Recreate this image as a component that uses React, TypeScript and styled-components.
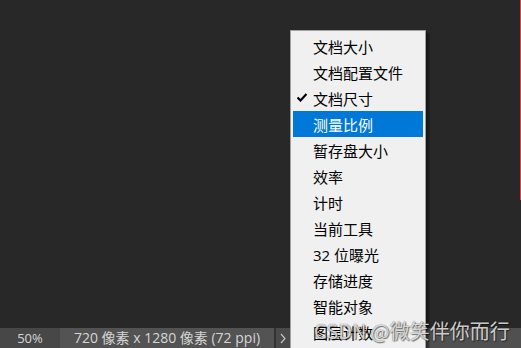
import React from "react"
import styled, { createGlobalStyle } from "styled-components"

const GlobalStyle = createGlobalStyle`
  html, body {
    margin: 0;
    padding: 0;
    background: #282828;
  }
  * {
    box-sizing: border-box;
  }
`

const Screen = styled.div`
  position: relative;
  width: 521px;
  height: 348px;
  overflow: hidden;
  display: flex;
  flex-direction: column;
  background: #282828;
  font-family: "Open Sans", "Noto Sans CJK SC", sans-serif;
`

const Canvas = styled.div`
  flex: 1;
  display: flex;
  justify-content: flex-end;
  align-items: flex-start;
`

const DocEdge = styled.div`
  width: 1px;
  height: 200px;
  background: #e8403f;
`

const StatusBar = styled.div`
  height: 20px;
  display: flex;
  background: #505050;
  color: #d6d6d6;
`

const Field = styled.div<{ $w: number; $bg: string; $size: number }>`
  width: ${({ $w }) => $w}px;
  background: ${({ $bg }) => $bg};
  font-size: ${({ $size }) => $size}px;
  display: flex;
  align-items: center;
  justify-content: center;
  white-space: nowrap;
  line-height: 20px;
`

const Divider = styled.div`
  width: 2px;
  background: #333333;
`

const ArrowBtn = styled.div`
  width: 14px;
  background: #4a4a4a;
  display: flex;
  align-items: center;
  justify-content: center;
`

const Menu = styled.ul`
  position: absolute;
  left: 290px;
  top: 30px;
  width: 136px;
  height: 330px;
  margin: 0;
  padding: 2px 2px;
  list-style: none;
  background: #f0f0f0;
  border: 1px solid #a0a0a0;
  box-shadow: 3px 3px 2px rgba(0, 0, 0, 0.45);
`

const Item = styled.li<{ $active?: boolean }>`
  position: relative;
  height: 26px;
  padding-left: 20px;
  display: flex;
  align-items: center;
  font-size: 15px;
  color: ${({ $active }) => ($active ? "#ffffff" : "#000000")};
  background: ${({ $active }) => ($active ? "#0078d7" : "transparent")};
  white-space: nowrap;
`

const Check = styled.svg`
  position: absolute;
  left: 4px;
  top: 8px;
`

const Watermark = styled.div`
  position: absolute;
  left: 314px;
  top: 316px;
  font-family: "Noto Sans CJK SC", sans-serif;
  font-size: 20px;
  color: rgba(255, 255, 255, 0.8);
  text-shadow: 0 0 1px rgba(0, 0, 0, 0.7), 1px 1px 1px rgba(0, 0, 0, 0.5);
  white-space: nowrap;
  pointer-events: none;
`

const items = [
  "文档大小",
  "文档配置文件",
  "文档尺寸",
  "测量比例",
  "暂存盘大小",
  "效率",
  "计时",
  "当前工具",
  "32 位曝光",
  "存储进度",
  "智能对象",
  "图层计数",
]

export default function App() {
  return (
    <>
      <GlobalStyle />
      <Screen>
        <Canvas>
          <DocEdge />
        </Canvas>
        <StatusBar>
          <Field $w={60} $bg="#474747" $size={13}>50%</Field>
          <Field $w={214} $bg="#535353" $size={14}>720 像素 x 1280 像素 (72 ppi)</Field>
          <Divider />
          <ArrowBtn>
            <svg width="6" height="11" viewBox="0 0 6 11">
              <path d="M1 1 L5 5.5 L1 10" fill="none" stroke="#c4c4c4" strokeWidth="1.2" />
            </svg>
          </ArrowBtn>
        </StatusBar>
        <Menu>
          {items.map((label, i) => (
            <Item key={label} $active={i === 3}>
              {i === 2 && (
                <Check width="10" height="9" viewBox="0 0 10 9">
                  <path d="M0.5 4.5 L3.5 7.5 L9.5 1" fill="none" stroke="#000" strokeWidth="2.2" />
                </Check>
              )}
              {label}
            </Item>
          ))}
        </Menu>
        <Watermark>CSDN @微笑伴你而行</Watermark>
      </Screen>
    </>
  )
}
